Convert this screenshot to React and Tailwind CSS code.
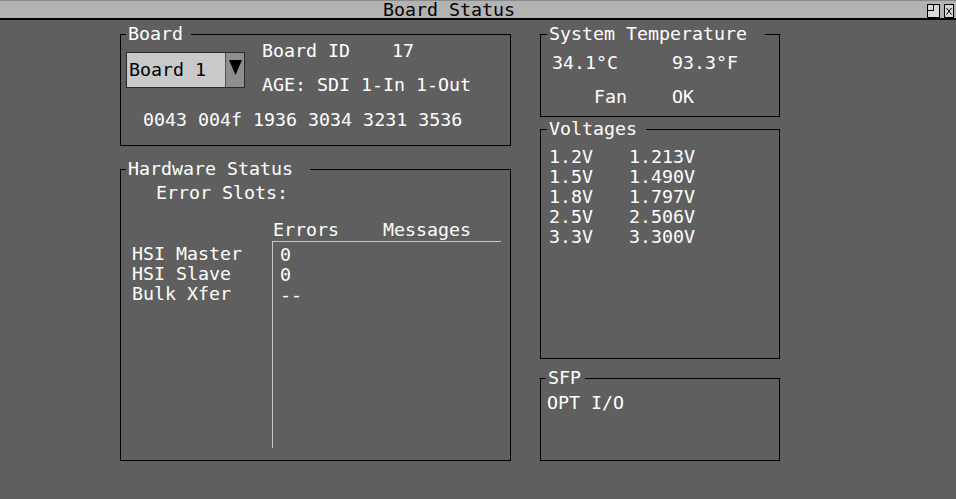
import React from 'react';

const voltages = [
  ['1.2V', '1.213V'],
  ['1.5V', '1.490V'],
  ['1.8V', '1.797V'],
  ['2.5V', '2.506V'],
  ['3.3V', '3.300V'],
];

const links = [
  ['HSI Master', '0'],
  ['HSI Slave', '0'],
  ['Bulk Xfer', '--'],
];

// Etched group box; the legend sits on the top border line
function Group({ title, legendClass, className = '', children }) {
  return (
    <fieldset className={`border border-black ${className}`}>
      <legend className={`h-4 leading-4 whitespace-pre ${legendClass}`}>{title}</legend>
      {children}
    </fieldset>
  );
}

function TitleBar() {
  return (
    <div className="flex h-[20px] border-t border-b-2 border-t-[#8a8a8a] border-b-black bg-[#b3b3b3] text-black">
      <div className="flex-1 pr-[29px] text-center leading-[17px]">Board Status</div>
      <div className="mr-[2px] flex items-start gap-[4px] pt-[3px]">
        <svg width="13" height="14" viewBox="0 0 13 14">
          <rect x="0.5" y="0.5" width="12" height="13" fill="#d6d6d6" stroke="#000" />
          <rect x="0.5" y="0.5" width="6" height="6" fill="none" stroke="#000" />
        </svg>
        <svg width="10" height="14" viewBox="0 0 10 14">
          <rect x="0.5" y="0.5" width="9" height="13" fill="#d6d6d6" stroke="#000" />
          <path d="M2.5 4 L7.5 10.5 M7.5 4 L2.5 10.5" stroke="#000" strokeWidth="1" fill="none" />
        </svg>
      </div>
    </div>
  );
}

export default function App() {
  return (
    <div className="h-screen w-full overflow-hidden bg-[#5f5f5f] font-['DejaVu_Sans_Mono',monospace] text-[18.3px] text-white">
      <TitleBar />

      <div className="flex gap-[29px] pl-[120px] pt-[6px]">
        {/* left column */}
        <div className="flex w-[391px] flex-col">
          <Group title="Board" legendClass="ml-[5px] pl-[2px] w-[65px]" className="pb-[16px]">
            <div className="flex items-start">
              <div className="mt-[10px] ml-[5px] flex h-9 w-[119px] border border-[#2a2a2a] bg-[#c9c9c9] text-black">
                <span className="flex-1 pl-[2px] leading-[34px]">Board 1</span>
                <span className="flex w-[19px] justify-center border-l border-[#555555] bg-[#8e8e8e] pt-[7px]">
                  <svg width="13" height="15" viewBox="0 0 13 15">
                    <polygon points="0,0 13,0 6.5,15" fill="#000" />
                  </svg>
                </span>
              </div>
              <div className="ml-[17px]">
                <div className="flex leading-[18px]">
                  <span className="w-[130px]">Board ID</span>
                  <span>17</span>
                </div>
                <div className="mt-4 leading-[18px]">AGE: SDI 1-In 1-Out</div>
              </div>
            </div>
            <div className="mt-[17px] pl-[22px] leading-[18px]">0043 004f 1936 3034 3231 3536</div>
          </Group>

          <Group title="Hardware Status" legendClass="ml-[5px] pl-[2px] w-[184px]" className="mt-[15px] pb-[12px]">
            <div className="mt-[7px] pl-[35px] leading-[18px]">Error Slots:</div>
            <div className="mt-[19px] flex pl-[152px] leading-[18px]">
              <span className="w-[110px]">Errors</span>
              <span>Messages</span>
            </div>
            <div className="mt-[2px] flex">
              <div className="w-[151px] pl-[11px] pt-[3px]">
                {links.map(([name]) => (
                  <div key={name} className="leading-5">{name}</div>
                ))}
              </div>
              <div className="h-[207px] w-[229px] border-l border-t border-[#c8c8c8] pl-[7px] pt-[3px]">
                {links.map(([name, count]) => (
                  <div key={name} className="leading-5">{count}</div>
                ))}
              </div>
            </div>
          </Group>
        </div>

        {/* right column */}
        <div className="flex w-[240px] flex-col">
          <Group title="System Temperature" legendClass="ml-[6px] pl-[2px] w-[218px]" className="pb-[10px]">
            <div className="mt-[12px] flex pl-[11px] leading-[18px]">
              <span className="w-[120px]">34.1°C</span>
              <span>93.3°F</span>
            </div>
            <div className="mt-4 flex pl-[11px] leading-[18px]">
              <span className="w-[120px] pl-[42px]">Fan</span>
              <span>OK</span>
            </div>
          </Group>

          <Group title="Voltages" legendClass="ml-[6px] pl-[2px] w-[99px]" className="mt-[4px] pb-[111px]">
            <div className="mt-[10px] pl-[8px]">
              {voltages.map(([rail, reading]) => (
                <div key={rail} className="flex leading-5">
                  <span className="w-[80px]">{rail}</span>
                  <span>{reading}</span>
                </div>
              ))}
            </div>
          </Group>

          <Group title="SFP" legendClass="ml-[5px] pl-[2px] w-[39px]" className="mt-[11px] pb-[48px]">
            <div className="mt-[8px] pl-[6px] leading-[18px]">OPT I/O</div>
          </Group>
        </div>
      </div>
    </div>
  );
}
